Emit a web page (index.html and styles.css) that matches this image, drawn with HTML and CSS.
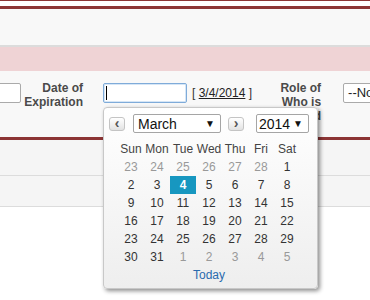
FILE: index.html
```html
<!DOCTYPE html>
<html lang="en">

<head>
    <meta charset="UTF-8">
    <meta name="viewport" content="width=device-width, initial-scale=1.0">
    <title>Date of Expiration</title>
    <link rel="stylesheet" href="styles.css">
</head>

<body>
    <div class="page-header">
        <div class="header-gap"></div>
        <div class="header-band"></div>
    </div>
    <div class="section-title"></div>

    <div class="form-row">
        <input type="text" class="field field-left">
        <label class="field-label label-expiration" for="expiration">Date of Expiration</label>
        <div class="date-wrap">
            <div class="date-input"><span class="caret"></span></div>

            <!-- date picker popup -->
            <div class="datepicker">
                <div class="dp-controls">
                    <span class="dp-btn">&lsaquo;</span>
                    <span class="dp-select dp-month"><span>March</span><span class="dp-arrow">&#9660;</span></span>
                    <span class="dp-btn">&rsaquo;</span>
                    <span class="dp-select dp-year"><span>2014</span><span class="dp-arrow">&#9660;</span></span>
                </div>
                <table class="dp-calendar">
                    <tr class="dp-days">
                        <th>Sun</th><th>Mon</th><th>Tue</th><th>Wed</th><th>Thu</th><th>Fri</th><th>Sat</th>
                    </tr>
                    <tr>
                        <td class="other">23</td><td class="other">24</td><td class="other">25</td><td class="other">26</td><td class="other">27</td><td class="other">28</td><td>1</td>
                    </tr>
                    <tr>
                        <td>2</td><td>3</td><td class="selected">4</td><td>5</td><td>6</td><td>7</td><td>8</td>
                    </tr>
                    <tr>
                        <td>9</td><td>10</td><td>11</td><td>12</td><td>13</td><td>14</td><td>15</td>
                    </tr>
                    <tr>
                        <td>16</td><td>17</td><td>18</td><td>19</td><td>20</td><td>21</td><td>22</td>
                    </tr>
                    <tr>
                        <td>23</td><td>24</td><td>25</td><td>26</td><td>27</td><td>28</td><td>29</td>
                    </tr>
                    <tr>
                        <td>30</td><td>31</td><td class="other">1</td><td class="other">2</td><td class="other">3</td><td class="other">4</td><td class="other">5</td>
                    </tr>
                </table>
                <div class="dp-today"><a href="#">Today</a></div>
            </div>
        </div>
        <span class="date-hint">[&nbsp;<a href="#">3/4/2014</a>&nbsp;]</span>
        <label class="field-label label-role">Role of Who is Involved</label>
        <div class="field select-box">--None--</div>
    </div>

    <div class="section-rule"></div>
    <div class="sub-row"></div>
    <div class="sub-row"></div>
</body>

</html>
```

FILE: styles.css
```css
body {
    font-family: "Liberation Sans", Arial, sans-serif;
    font-size: 12px;
    color: #333;
    margin: 0;
    padding: 0;
    width: 370px;
    height: 300px;
    overflow: hidden;
    background: #fff;
}

.page-header {
    border-top: 1px solid #8c3535;
}

.header-gap {
    height: 5px;
    background: #fff;
}

.header-band {
    box-sizing: border-box;
    height: 41px;
    border-top: 3px solid #8c3535;
    border-bottom: 2px solid #dcdcdc;
    background: #f8f8f8;
}

.section-title {
    height: 24px;
    background: #efd3d5;
}

.form-row {
    display: flex;
    align-items: flex-start;
    height: 54px;
    padding-top: 12px;
    background: #f8f8f8;
}

.field {
    box-sizing: border-box;
    height: 20px;
    border: 1px solid #aaa;
    border-radius: 2px;
    background: #fff;
    flex-shrink: 0;
}

.field-left {
    width: 61px;
    margin: 0 0 0 -40px;
    padding: 0;
}

.field-label {
    flex-shrink: 0;
    font-weight: bold;
    color: #4a4a4a;
    text-align: right;
    line-height: 14px;
    margin-top: -2px;
}

.label-expiration {
    width: 62px;
    margin-right: 20px;
}

.date-wrap {
    position: relative;
    flex-shrink: 0;
}

.date-input {
    box-sizing: border-box;
    width: 84px;
    height: 20px;
    border: 1px solid #7fabd9;
    border-radius: 2px;
    background: #fff;
    box-shadow: inset 0 0 0 1px #d6e6f6;
    padding: 2px 0 0 2px;
}

.caret {
    display: block;
    width: 1px;
    height: 14px;
    background: #000;
}

.date-hint {
    flex-shrink: 0;
    margin-left: 5px;
    line-height: 20px;
    color: #333;
}

.date-hint a {
    color: #222;
}

.label-role {
    width: 52px;
    margin-left: 17px;
}

.select-box {
    width: 80px;
    margin-left: 22px;
    padding-left: 4px;
    font-size: 13px;
    line-height: 18px;
    color: #222;
}

.section-rule {
    height: 3px;
    background: #8c3535;
}

.sub-row {
    height: 35px;
    background: #f5f5f5;
    border-bottom: 1px solid #dcdcdc;
}

.sub-row + .sub-row {
    height: 30px;
}

/* date picker */
.datepicker {
    position: absolute;
    top: 24px;
    left: 0;
    width: 215px;
    box-sizing: border-box;
    padding: 6px 0 4px 14px;
    border: 1px solid #c8c8c8;
    border-radius: 4px;
    background: linear-gradient(#fff, #eee);
    box-shadow: 2px 2px 4px rgba(0, 0, 0, 0.45);
    z-index: 10;
}

.dp-controls {
    display: flex;
    align-items: center;
    height: 19px;
    margin-left: -9px;
    margin-bottom: 7px;
}

.dp-btn {
    box-sizing: border-box;
    width: 16px;
    height: 14px;
    border: 1px solid #c4c4c4;
    border-radius: 3px;
    background: linear-gradient(#fff, #e2e2e2);
    font-size: 14px;
    font-weight: bold;
    line-height: 10px;
    text-align: center;
    color: #555;
}

.dp-select {
    box-sizing: border-box;
    display: flex;
    justify-content: space-between;
    align-items: center;
    height: 19px;
    margin-left: 8px;
    margin-right: 7px;
    padding: 0 5px 0 4px;
    border: 1px solid #a5a5a5;
    border-radius: 2px;
    background: #fff;
    font-size: 14px;
    color: #111;
}

.dp-month {
    width: 88px;
}

.dp-year {
    width: 53px;
    margin-left: 12px;
    margin-right: 0;
    padding-left: 2px;
}

.dp-arrow {
    font-size: 10px;
}

.dp-calendar {
    border-collapse: collapse;
    border-spacing: 0;
}

.dp-calendar th,
.dp-calendar td {
    width: 26px;
    height: 18px;
    padding: 0;
    text-align: center;
    font-weight: normal;
    color: #333;
}

.dp-calendar th {
    color: #444;
}

.dp-calendar td.other {
    color: #999;
}

.dp-calendar td.selected {
    background: #1797c0;
    color: #fff;
    font-weight: bold;
}

.dp-today {
    width: 182px;
    text-align: center;
    line-height: 18px;
}

.dp-today a {
    color: #2a6bae;
    text-decoration: none;
}
```
